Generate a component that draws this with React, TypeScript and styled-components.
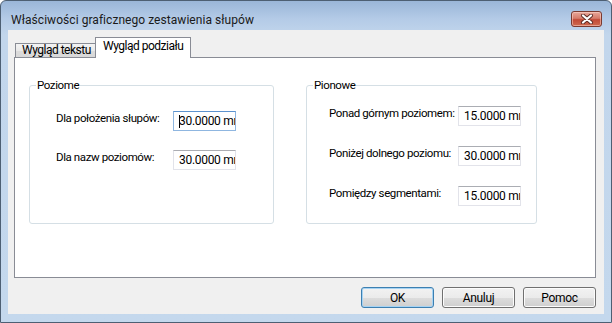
import styled, { createGlobalStyle } from "styled-components";

const GlobalStyle = createGlobalStyle`
  html, body {
    margin: 0;
    padding: 0;
    background: #ffffff;
  }
  * {
    box-sizing: border-box;
  }
`;

// Segoe UI is not there, Roboto with a bit of negative tracking comes closest in width
const UI_FONT = `Roboto, "Noto Sans", sans-serif`;

type Row = { label: string; value: string; focused?: boolean };

const poziome: Row[] = [
  { label: "Dla położenia słupów:", value: "30.0000 mm", focused: true },
  { label: "Dla nazw poziomów:", value: "30.0000 mm" },
];

const pionowe: Row[] = [
  { label: "Ponad górnym poziomem:", value: "15.0000 mm" },
  { label: "Poniżej dolnego poziomu:", value: "30.0000 mm" },
  { label: "Pomiędzy segmentami:", value: "15.0000 mm" },
];

export default function App() {
  return (
    <>
      <GlobalStyle />
      <Window>
        <TitleBar>
          <Title>Właściwości graficznego zestawienia słupów</Title>
          <CloseButton aria-label="Zamknij">
            <svg width="14" height="10" viewBox="0 0 14 10">
              <path d="M3 1.5 L11 8.5 M11 1.5 L3 8.5" stroke="#5b2a24" strokeWidth="4" strokeLinecap="round" />
              <path d="M3 1.5 L11 8.5 M11 1.5 L3 8.5" stroke="#ffffff" strokeWidth="2.2" strokeLinecap="round" />
            </svg>
          </CloseButton>
        </TitleBar>

        <Client>
          <TabStrip>
            <Tab>Wygląd tekstu</Tab>
            <Tab $active>Wygląd podziału</Tab>
          </TabStrip>

          <TabPanel>
            <GroupBox $width={245}>
              <Legend>Poziome</Legend>
              <FieldGrid $labelWidth={117} $rowGap={19} $padTop={18} $padLeft={26}>
                {poziome.map((r) => (
                  <FieldRow key={r.label}>
                    <Label>{r.label}</Label>
                    <Field $focused={r.focused}>
                      {r.focused && <Caret />}
                      {r.value}
                    </Field>
                  </FieldRow>
                ))}
              </FieldGrid>
            </GroupBox>

            <GroupBox $width={231}>
              <Legend>Pionowe</Legend>
              <FieldGrid $labelWidth={129} $rowGap={20} $padTop={13} $padLeft={22}>
                {pionowe.map((r) => (
                  <FieldRow key={r.label}>
                    <Label>{r.label}</Label>
                    <Field>{r.value}</Field>
                  </FieldRow>
                ))}
              </FieldGrid>
            </GroupBox>
          </TabPanel>

          <ButtonRow>
            <DialogButton $default>OK</DialogButton>
            <DialogButton>Anuluj</DialogButton>
            <DialogButton>Pomoc</DialogButton>
          </ButtonRow>
        </Client>
      </Window>
    </>
  );
}

const Window = styled.div`
  width: 612px;
  height: 323px;
  border: 1px solid #4d5f73;
  border-radius: 6px 6px 0 0;
  background: linear-gradient(to bottom, #9ab6d8 0px, #b4cbe7 18px, #c2d6ec 34px, #c4d8ed 100%);
  display: flex;
  flex-direction: column;
  font-family: ${UI_FONT};
  font-size: 12px;
  letter-spacing: -0.5px;
  color: #000;
`;

const TitleBar = styled.div`
  height: 29px;
  padding: 10px 9px 0 10px;
  display: flex;
  align-items: flex-start;
  justify-content: space-between;
`;

const Title = styled.span`
  margin-top: 1px;
  line-height: 16px;
  font-size: 12px;
  letter-spacing: 0.05px;
  color: #1a1a1a;
`;

const CloseButton = styled.div`
  width: 31px;
  height: 16px;
  border: 1px solid #7a3a30;
  border-radius: 3px;
  background: linear-gradient(to bottom, #e8a79a 0%, #d67c6b 45%, #c24a36 55%, #cf6a4f 100%);
  box-shadow: inset 0 0 0 1px rgba(255, 220, 210, 0.5);
  display: flex;
  align-items: center;
  justify-content: center;
`;

const Client = styled.div`
  flex: 1;
  margin: 0 7px 8px;
  background: #f0f0f0;
  padding: 7px 8px 0 6px;
  display: flex;
  flex-direction: column;
`;

const TabStrip = styled.div`
  height: 20px;
  padding-left: 1px;
  display: flex;
  align-items: flex-end;
`;

const Tab = styled.div<{ $active?: boolean }>`
  position: relative;
  z-index: ${(p) => (p.$active ? 1 : 0)};
  width: ${(p) => (p.$active ? "96px" : "81px")};
  height: ${(p) => (p.$active ? "21px" : "14px")};
  margin-left: ${(p) => (p.$active ? "-1px" : "0")};
  margin-bottom: ${(p) => (p.$active ? "-1px" : "0")};
  border: 1px solid #898c95;
  border-bottom: ${(p) => (p.$active ? "none" : "0")};
  background: ${(p) => (p.$active ? "#ffffff" : "linear-gradient(to bottom, #f3f3f3, #e9e9e9 50%, #dcdcdc 51%, #d8d8d8)")};
  line-height: ${(p) => (p.$active ? "16px" : "13px")};
  padding-left: ${(p) => (p.$active ? "7px" : "6px")};
  white-space: nowrap;
`;

const TabPanel = styled.div`
  height: 221px;
  border: 1px solid #898c95;
  background: #ffffff;
  padding: 20px 0 0 14px;
  display: flex;
  align-items: flex-start;
  gap: 32px;
  font-size: 11.5px;
  letter-spacing: -0.4px;
`;

const GroupBox = styled.fieldset<{ $width: number }>`
  width: ${(p) => p.$width}px;
  height: 146px;
  margin: 0;
  padding: 0;
  border: 1px solid #d5dfe5;
  border-radius: 3px;
  min-width: 0;
`;

const Legend = styled.legend`
  margin-left: 6px;
  padding: 0 1px;
  line-height: 15px;
  color: #000;
`;

const FieldGrid = styled.div<{ $labelWidth: number; $rowGap: number; $padTop: number; $padLeft: number }>`
  display: grid;
  grid-template-columns: ${(p) => p.$labelWidth}px 63px;
  row-gap: ${(p) => p.$rowGap}px;
  padding: ${(p) => p.$padTop}px 0 0 ${(p) => p.$padLeft}px;
`;

const FieldRow = styled.div`
  display: contents;
`;

const Label = styled.span`
  line-height: 15px;
  white-space: nowrap;
`;

const Field = styled.div<{ $focused?: boolean }>`
  position: relative;
  height: 20px;
  border: 1px solid ${(p) => (p.$focused ? "#8fb6e0" : "#e2e3ea")};
  border-top-color: ${(p) => (p.$focused ? "#5d93cf" : "#abadb3")};
  background: #ffffff;
  padding-left: 5px;
  font-size: 12px;
  line-height: 18px;
  letter-spacing: -0.3px;
  white-space: nowrap;
  overflow: hidden;
`;

const Caret = styled.span`
  position: absolute;
  left: 5px;
  top: 3px;
  width: 1px;
  height: 13px;
  background: #000;
`;

const ButtonRow = styled.div`
  margin-top: 9px;
  padding-right: 0;
  display: flex;
  justify-content: flex-end;
  gap: 8px;
`;

const DialogButton = styled.button<{ $default?: boolean }>`
  width: 73px;
  height: 21px;
  padding: 0;
  font-family: ${UI_FONT};
  font-size: 12px;
  letter-spacing: -0.3px;
  color: #000;
  border: 1px solid ${(p) => (p.$default ? "#3c7fb1" : "#707070")};
  border-radius: 3px;
  background: linear-gradient(to bottom, #f2f2f2 0%, #ebebeb 50%, #dddddd 51%, #cfcfcf 100%);
  box-shadow: inset 0 0 0 1px ${(p) => (p.$default ? "#a6d3f3" : "#fcfcfc")};
`;
